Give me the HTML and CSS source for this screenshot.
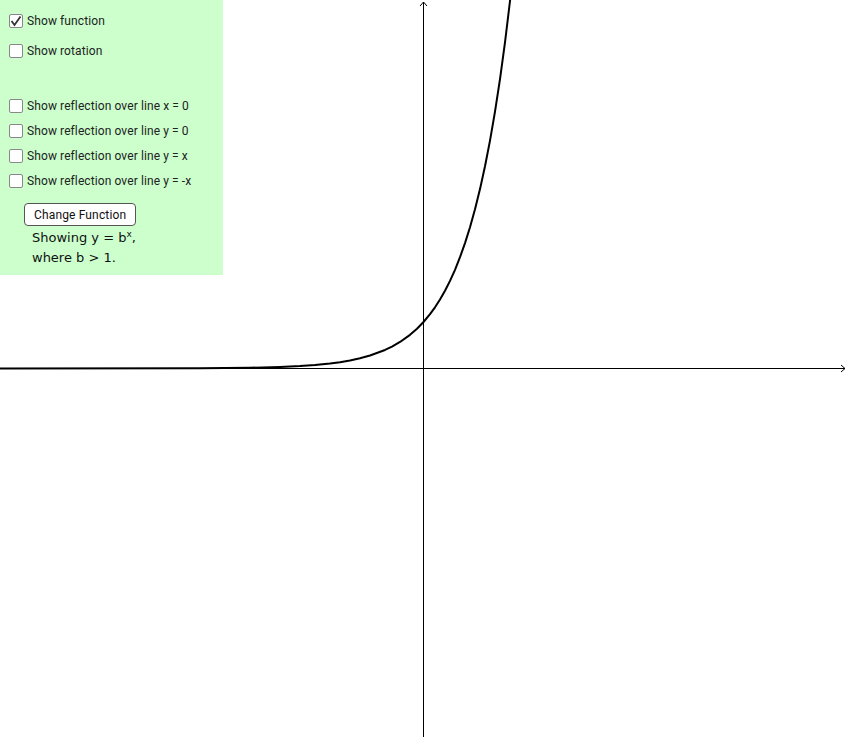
FILE: index.html
```html
<!DOCTYPE html>
<html>
<head>
<meta charset="utf-8">
<link rel="stylesheet" href="styles.css">
</head>
<body>
<div class="app">
  <svg class="canvas" width="848" height="739" viewBox="0 0 848 739" xmlns="http://www.w3.org/2000/svg">
    <g class="axis">
      <line x1="0" y1="368.5" x2="845" y2="368.5"/>
      <polyline points="841,365 845,368.5 841,372" fill="none"/>
      <line x1="423.5" y1="2" x2="423.5" y2="737"/>
      <polyline points="420,6 423.5,2 427,6" fill="none"/>
    </g>
    <polyline class="curve" points="0,368.5 200,368.28 250,367.77 280,366.99 300,366.07 315,365.02 330,363.53 340,362.18 350,360.47 360,358.31 370,355.55 385,349.97 392,346.6 400,341.98 410,334.82 417,328.7 423.5,322 430,314.2 435,307.3 440,299.5 445,290.8 450,280.9 455,269.8 460,257.2 465,243.1 470,227.2 475,209.3 480,189.1 485,166.3 490,140.6 495,111.7 500,79.1 505,42.3 510,1 512,-17"/>
  </svg>
  <div class="panel">
    <label class="row first"><span class="box checked"><svg width="14" height="14" viewBox="0 0 14 14"><polyline points="2.5,7 5.5,11 11.5,2.5" fill="none" stroke="#333" stroke-width="1.8"/></svg></span>Show function</label>
    <label class="row second"><span class="box"></span>Show rotation</label>
    <label class="row third"><span class="box"></span>Show reflection over line x = 0</label>
    <label class="row"><span class="box"></span>Show reflection over line y = 0</label>
    <label class="row"><span class="box"></span>Show reflection over line y = x</label>
    <label class="row"><span class="box"></span>Show reflection over line y = -x</label>
    <button class="btn">Change Function</button>
    <div class="math">
      <div class="line">Showing y = b<sup>x</sup>,</div>
      <div class="line">where b &gt; 1.</div>
    </div>
  </div>
</div>
</body>
</html>
```
FILE: styles.css
```css
html, body {
  margin: 0;
  padding: 0;
  background: #ffffff;
}
.app {
  position: relative;
  width: 848px;
  height: 739px;
  overflow: hidden;
}
.canvas {
  display: block;
}
.axis line, .axis polyline {
  stroke: #000;
  stroke-width: 1;
}
.curve {
  fill: none;
  stroke: #000;
  stroke-width: 2;
  stroke-linejoin: round;
}
.panel {
  position: absolute;
  top: 0;
  left: 0;
  width: 214px;
  height: 275px;
  padding-left: 9px;
  background: #ccffcc;
  display: flex;
  flex-direction: column;
  align-items: flex-start;
  font-family: Roboto, "Liberation Sans", sans-serif;
  font-size: 12px;
  letter-spacing: 0.1px;
  color: #222;
}
.row {
  display: flex;
  align-items: center;
  gap: 4px;
  height: 24px;
  margin-top: 1px;
}
.row.first { margin-top: 9px; }
.row.second { margin-top: 6px; }
.row.third { margin-top: 31px; }
.box {
  box-sizing: border-box;
  width: 14px;
  height: 14px;
  border: 1px solid #888;
  border-radius: 2px;
  background: #fff;
  display: flex;
}
.box svg { display: block; margin: -1px; }
.btn {
  margin-top: 10px;
  margin-left: 15px;
  height: 23px;
  padding: 0 9px;
  border: 1px solid #555;
  border-radius: 4px;
  background: #fff;
  font-family: Roboto, "Liberation Sans", sans-serif;
  font-size: 12px;
  letter-spacing: 0.15px;
  color: #111;
}
.math {
  margin-top: 2px;
  margin-left: 23px;
  font-family: "DejaVu Sans", sans-serif;
  font-size: 13px;
  letter-spacing: 0;
  color: #111;
}
.line {
  height: 20px;
  line-height: 20px;
}
.math sup {
  font-size: 9px;
  vertical-align: 5px;
  line-height: 0;
}
```
